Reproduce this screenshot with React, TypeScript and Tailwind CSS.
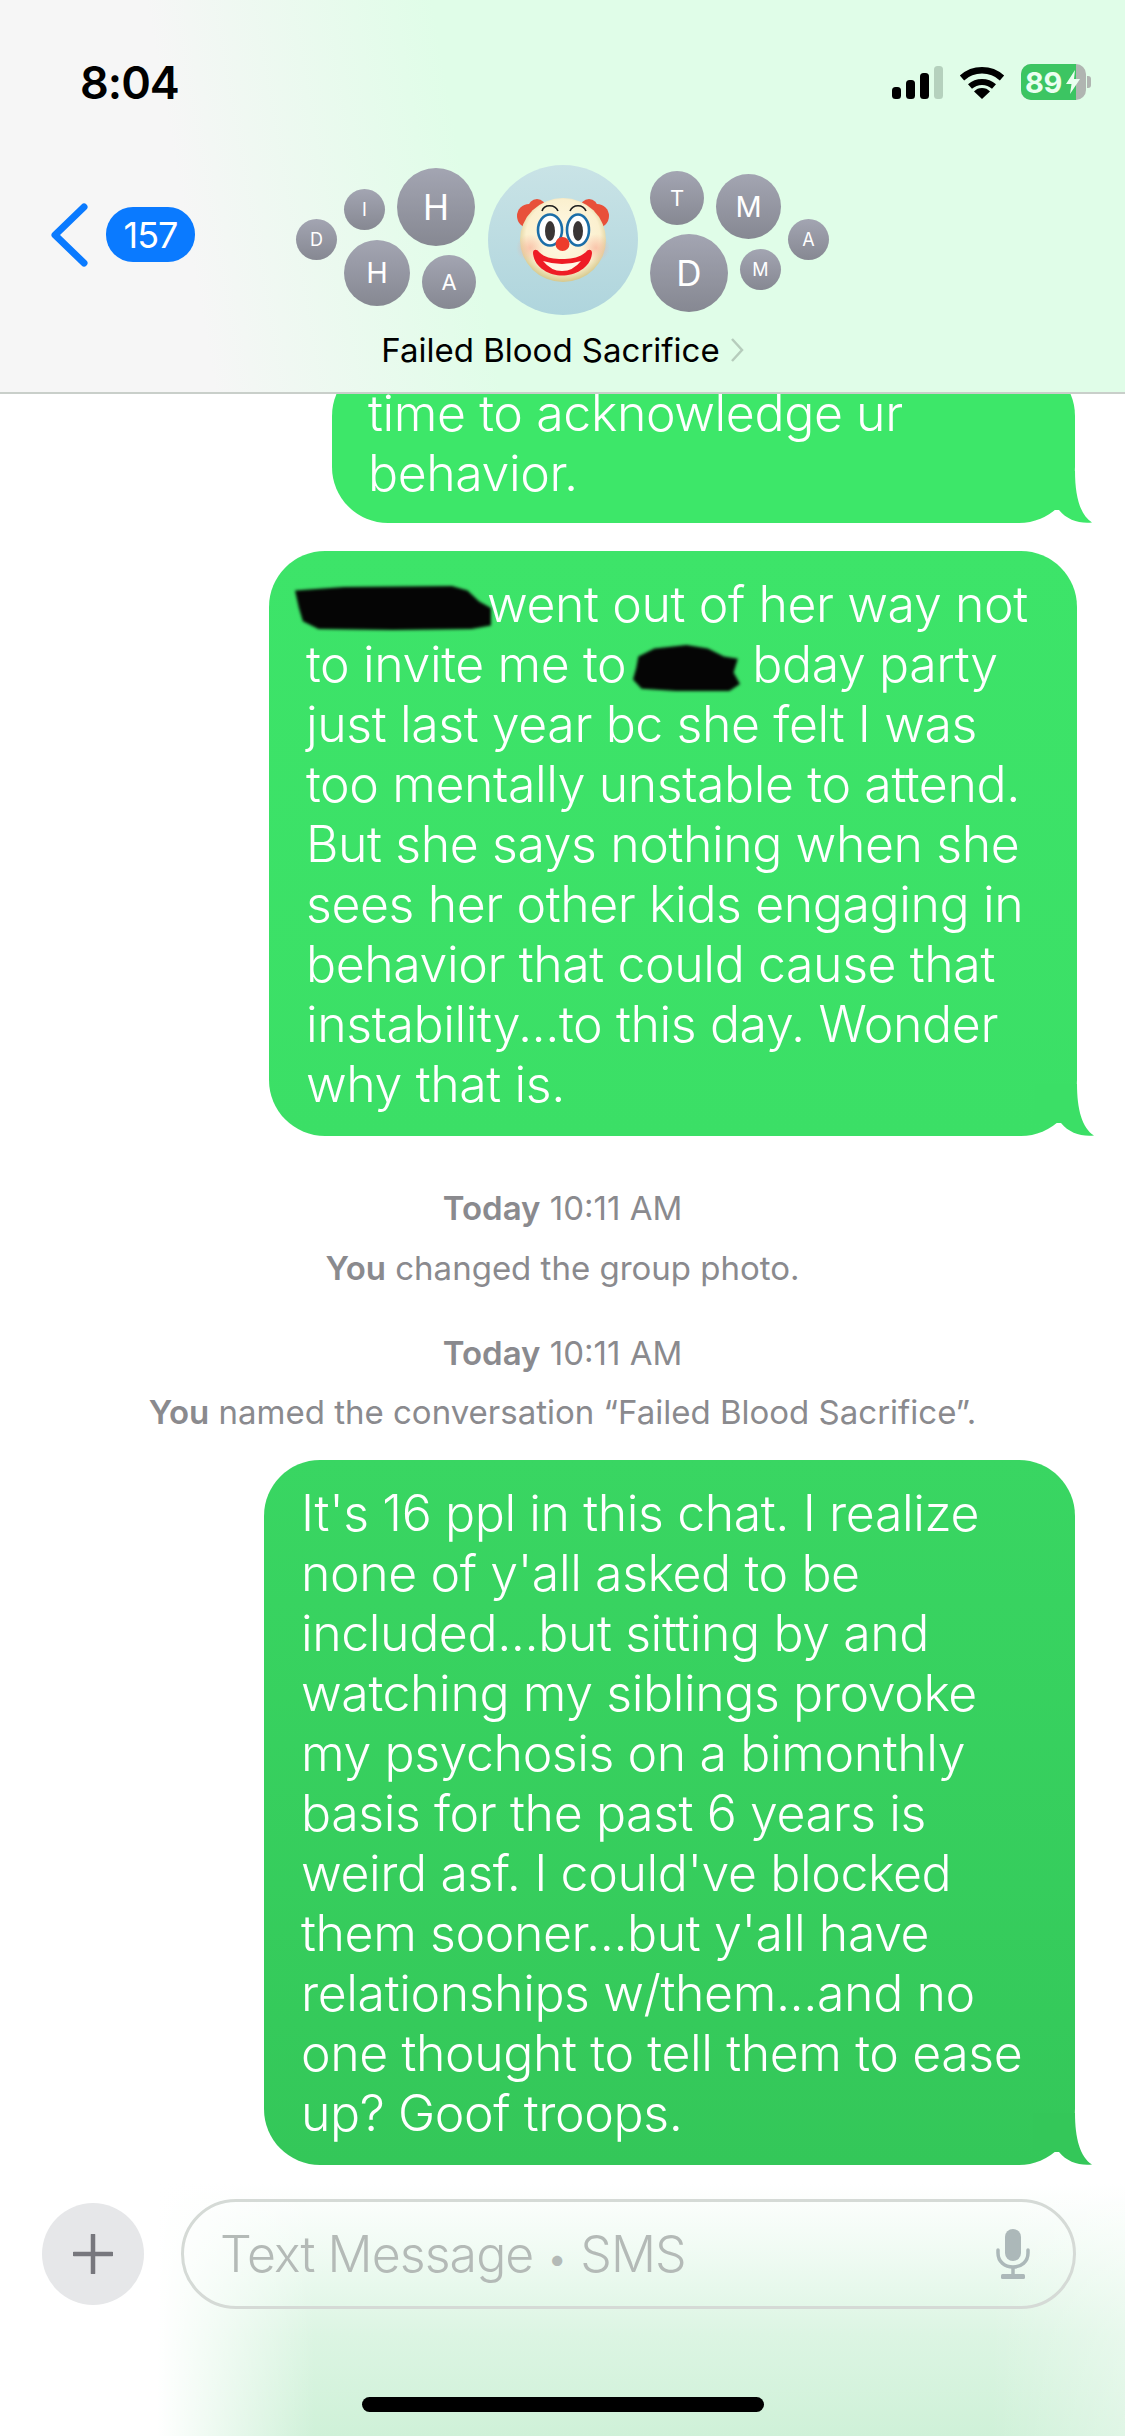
const avatars = [
  { label: "D", className: "left-[6px] top-[54px] w-[41px] h-[41px] text-[18px]" },
  { label: "I", className: "left-[54px] top-[24px] w-[41px] h-[41px] text-[18px]" },
  { label: "H", className: "left-[107px] top-[3px] w-[78px] h-[78px] text-[35px]" },
  { label: "H", className: "left-[54px] top-[75px] w-[66px] h-[66px] text-[29px]" },
  { label: "A", className: "left-[132px] top-[90px] w-[54px] h-[54px] text-[22px]" },
  { label: "T", className: "left-[360px] top-[6px] w-[54px] h-[54px] text-[22px]" },
  { label: "M", className: "left-[426px] top-[9px] w-[65px] h-[65px] text-[29px]" },
  { label: "D", className: "left-[360px] top-[69px] w-[78px] h-[78px] text-[35px]" },
  { label: "M", className: "left-[450px] top-[84px] w-[41px] h-[41px] text-[18px]" },
  { label: "A", className: "left-[498px] top-[54px] w-[41px] h-[41px] text-[18px]" },
];

function ClownFace() {
  return (
    <svg viewBox="0 0 100 100" className="w-[100px] h-[100px]">
      <defs>
        <radialGradient id="face" cx="50%" cy="45%" r="55%">
          <stop offset="0%" stopColor="#fff9e6" />
          <stop offset="78%" stopColor="#fbf0cf" />
          <stop offset="100%" stopColor="#d6c88c" />
        </radialGradient>
        <radialGradient id="cheek">
          <stop offset="0%" stopColor="#f8a892" stopOpacity="0.6" />
          <stop offset="100%" stopColor="#f8a892" stopOpacity="0" />
        </radialGradient>
      </defs>
      <circle cx="16" cy="26" r="12" fill="#e8503a" />
      <circle cx="24" cy="18" r="9" fill="#e8503a" />
      <circle cx="84" cy="26" r="12" fill="#e8503a" />
      <circle cx="76" cy="18" r="9" fill="#e8503a" />
      <ellipse cx="50" cy="50" rx="43" ry="42" fill="url(#face)" />
      <circle cx="17" cy="58" r="14" fill="url(#cheek)" />
      <circle cx="83" cy="58" r="14" fill="url(#cheek)" />
      <path d="M29 21C31 14 42 14 45 21M57 21C60 14 70 14 73 21" fill="none" stroke="#1c1c1c" strokeWidth="1.600" />
      <ellipse cx="37" cy="40" rx="12" ry="15.500" fill="#fff" stroke="#1b6ea8" strokeWidth="2.600" />
      <ellipse cx="65" cy="40" rx="11" ry="15.500" fill="#fff" stroke="#1b6ea8" strokeWidth="2.600" />
      <ellipse cx="37" cy="41" rx="5" ry="10" fill="#3a3535" />
      <ellipse cx="65" cy="41" rx="5" ry="10" fill="#3a3535" />
      <path d="M20 63C21 78 37 85.500 49 85.500C62 85.500 78 78 79 63C79 59 75 59 73 62C66 68 58 69 49 69C40 69 32 68 26 62C24 59 20 59 20 63Z" fill="#ee1c25" />
      <path d="M30 71Q49 77 68 71Q60 81 49 81Q38 81 30 71Z" fill="#fff8e6" />
      <circle cx="49.500" cy="54" r="7" fill="#ee3b2c" />
    </svg>
  );
}

function StatusIcons() {
  return (
    <div className="flex items-center">
      <svg viewBox="0 0 51 33" className="w-[51px] h-[33px]">
        <rect x="0" y="21" width="9" height="12" rx="3.500" fill="#000" />
        <rect x="14" y="14" width="9" height="19" rx="3.500" fill="#000" />
        <rect x="28" y="7" width="9" height="26" rx="3.500" fill="#000" />
        <rect x="42" y="0" width="9" height="33" rx="3.500" fill="#b5d1bd" />
      </svg>
      <svg viewBox="0 0 46 33" className="w-[46px] h-[33px] ml-[16px]">
        <path d="M3 12A30 30 0 0 1 43 12" fill="none" stroke="#000" strokeWidth="6.500" />
        <path d="M11 20.500A18 18 0 0 1 35 20.500" fill="none" stroke="#000" strokeWidth="6" />
        <path d="M23 33L15 25.500A11 11 0 0 1 31 25.500Z" fill="#000" />
      </svg>
      <div className="relative ml-[16px] flex h-[36px] w-[65px] items-center overflow-hidden rounded-[10px] bg-[#b0b5b1]">
        <div className="flex h-full w-[55px] items-center bg-[#3cc562] pl-[4px] text-[29px] font-bold leading-none tracking-[-0.5px] text-[#eafff0]">89</div>
        <svg viewBox="0 0 14 24" className="absolute left-[45px] top-[6px] h-[24px] w-[14px]">
          <path d="M9 0L0 14H5.500L4 24L14 9H8Z" fill="#eafff0" />
        </svg>
      </div>
      <div className="ml-[1px] h-[12px] w-[4px] rounded-r-[3px] bg-[#b0b5b1]" />
    </div>
  );
}

function Tail({ color }: { color: string }) {
  return (
    <svg viewBox="0 0 60 52" className="absolute bottom-0 right-[-18px] h-[52px] w-[60px]" style={{ color }}>
      <path d="M0 0H42C42 25 47 44 59 51.500C47 53 34 49 26 39H0Z" fill="currentColor" />
    </svg>
  );
}

function Blob({ className, d }: { className: string; d: string }) {
  return (
    <svg viewBox="0 0 100 40" preserveAspectRatio="none" className={`inline-block align-middle blur-[1.5px] ${className}`}>
      <path d={d} fill="#050505" />
    </svg>
  );
}

function SystemNote({ className, children }: { className: string; children: React.ReactNode }) {
  return <div className={`h-[40px] text-center text-[33px] font-normal leading-[40px] tracking-normal text-[#8a8a8e] ${className}`}>{children}</div>;
}

export default function App() {
  return (
    <div className="flex h-[2436px] w-[1125px] flex-col overflow-hidden bg-white [font-family:Inter,'Liberation_Sans',sans-serif]">
      <header className="flex h-[394px] shrink-0 flex-col border-b-2 border-[#c9cfca] bg-[linear-gradient(80deg,#f6f6f6_18%,#e0fde8_42%,#e0fde8_100%)]">
        <div className="mt-[64px] flex h-[36px] items-center justify-between pl-[80px] pr-[34px]">
          <span className="text-[45px] font-semibold leading-none tracking-[-1px] text-black">8:04</span>
          <StatusIcons />
        </div>

        <div className="mt-[65px] flex h-[150px] items-center pl-[50px]">
          <div className="mb-[11px] flex items-center">
            <svg viewBox="0 0 38 64" className="h-[64px] w-[38px]">
              <path d="M34 4L5 32L34 60" fill="none" stroke="#0a7aff" strokeWidth="7" strokeLinecap="round" strokeLinejoin="round" />
            </svg>
            <div className="ml-[18px] flex h-[55px] w-[89px] items-center justify-center rounded-[27px] bg-[#0a7aff] text-[36px] leading-none tracking-[-1px] text-white">157</div>
          </div>
          <div className="relative ml-[95px] h-[150px] w-[545px]">
            {avatars.map((a, i) => (
              <div key={i} className={`absolute flex items-center justify-center rounded-full bg-[linear-gradient(#a3a5b2,#868892)] font-normal text-white ${a.className}`}>
                {a.label}
              </div>
            ))}
            <div className="absolute left-[198px] top-0 flex h-[150px] w-[150px] items-center justify-center rounded-full bg-[linear-gradient(#c9e3e6,#afd5dd)]">
              <ClownFace />
            </div>
          </div>
        </div>

        <div className="mt-[15px] flex h-[40px] items-center justify-center">
          <span className="text-[33px] leading-[40px] text-black">Failed Blood Sacrifice</span>
          <svg viewBox="0 0 14 26" className="ml-[10px] h-[26px] w-[14px]">
            <path d="M2 2L12 13L2 24" fill="none" stroke="#b6ccbc" strokeWidth="2.500" />
          </svg>
        </div>
      </header>

      <main className="flex flex-1 flex-col overflow-hidden text-[50px] font-[350] leading-[60px] tracking-[-0.4px] text-white">
        <div className="relative mr-[50px] mt-[-34px] w-[743px] self-end rounded-[56px] bg-[#3de769] pb-[20px] pl-[36px] pt-[23px]">
          time to acknowledge ur
          <br />
          behavior.
          <Tail color="#3de769" />
        </div>

        <div className="relative mr-[48px] mt-[28px] w-[808px] self-end rounded-[56px] bg-[linear-gradient(#3de469,#3bdf66)] pb-[22px] pl-[37px] pt-[23px]">
          <Blob className="ml-[-11px] mr-[-4px] h-[44px] w-[196px]" d="M0 4L25 1L80 0L88 4L94 14L100 20L100 36L90 39L50 40L12 39L4 32L2 20Z" />
          went out of her way not
          <br />
          to invite me to
          <Blob className="ml-[7px] mr-[12px] h-[46px] w-[107px]" d="M5 10L20 3L50 0L70 3L85 10L98 12L94 24L100 34L90 40L40 40L8 38L0 30L3 20Z" />
          bday party
          <br />
          just last year bc she felt I was
          <br />
          too mentally unstable to attend.
          <br />
          But she says nothing when she
          <br />
          sees her other kids engaging in
          <br />
          behavior that could cause that
          <br />
          instability...to this day. Wonder
          <br />
          why that is.
          <Tail color="#3bdf66" />
        </div>

        <SystemNote className="mt-[52px]">
          <span className="font-semibold">Today</span> 10:11 AM
        </SystemNote>
        <SystemNote className="mt-[20px]">
          <span className="font-semibold">You</span> changed the group photo.
        </SystemNote>
        <SystemNote className="mt-[45px]">
          <span className="font-semibold">Today</span> 10:11 AM
        </SystemNote>
        <SystemNote className="mt-[19px]">
          <span className="font-semibold">You</span> named the conversation “Failed Blood Sacrifice”.
        </SystemNote>

        <div className="relative mr-[50px] mt-[28px] w-[811px] self-end rounded-[56px] bg-[linear-gradient(#39d662,#34c759)] pb-[22px] pl-[37px] pt-[23px]">
          It's 16 ppl in this chat. I realize
          <br />
          none of y'all asked to be
          <br />
          included...but sitting by and
          <br />
          watching my siblings provoke
          <br />
          my psychosis on a bimonthly
          <br />
          basis for the past 6 years is
          <br />
          weird asf. I could've blocked
          <br />
          them sooner...but y'all have
          <br />
          relationships w/them...and no
          <br />
          one thought to tell them to ease
          <br />
          up? Goof troops.
          <Tail color="#34c759" />
        </div>
      </main>

      <footer className="flex h-[252px] shrink-0 flex-col bg-[linear-gradient(90deg,#ffffff_14%,#ffffff00_28%,#ffffff00_88%,#ffffff59_100%),linear-gradient(180deg,#ffffff_0%,#f1fbf4_25%,#dcf5e3_60%,#cff1d8_100%)]">
        <div className="mt-[15px] flex items-center pl-[42px]">
          <div className="flex h-[102px] w-[102px] items-center justify-center rounded-full bg-[#e6e7e9]">
            <svg viewBox="0 0 40 40" className="h-[40px] w-[40px]">
              <path d="M20 1V39M1 20H39" stroke="#77777d" strokeWidth="4.500" strokeLinecap="round" />
            </svg>
          </div>
          <div className="ml-[37px] flex h-[110px] w-[895px] items-center justify-between rounded-[55px] border-[3px] border-[#d5dad6] pl-[36px] pr-[42px]">
            <span className="text-[50px] font-[350] leading-none tracking-[-0.9px] text-[#b4bab7]">
              Text Message <span className="text-[38px]">•</span> SMS
            </span>
            <svg viewBox="0 0 36 50" className="h-[50px] w-[36px]">
              <rect x="10" y="0" width="16" height="32" rx="8" fill="#acb8b9" />
              <path d="M3 21V24C3 33 10 38 18 38C26 38 33 33 33 24V21" fill="none" stroke="#acb8b9" strokeWidth="3.500" strokeLinecap="round" />
              <path d="M18 38V46" stroke="#acb8b9" strokeWidth="3.500" />
              <rect x="6" y="45" width="24" height="5" rx="1.500" fill="#acb8b9" />
            </svg>
          </div>
        </div>
        <div className="mx-auto mt-[88px] h-[15px] w-[402px] rounded-full bg-black" />
      </footer>
    </div>
  );
}
